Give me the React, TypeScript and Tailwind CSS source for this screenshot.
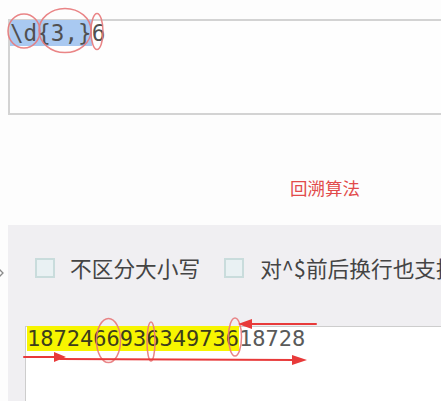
import React from "react";

const mono = { fontFamily: '"DejaVu Sans Mono", "Liberation Mono", monospace' };
const cjk = { fontFamily: '"Noto Sans CJK SC", "Noto Sans", sans-serif' };

function Checkbox() {
  return <div className="w-[20px] h-[20px] border-2 border-[#c9dcdc] bg-[#e9f1f3] shrink-0" />;
}

export default function App() {
  return (
    <div className="relative w-[441px] h-[401px] overflow-hidden bg-[#fdfdfd]">
      <div className="flex flex-col h-full">
        {/* top textbox */}
        <div className="pt-[19px] pl-[8px]">
          <div className="w-[450px] h-[96px] border-2 border-[#d3d3d3] bg-[#fefefe] pt-[1px]">
            <div className="text-[22.6px] leading-[23px] text-[#505050] whitespace-pre" style={mono}>
              <span className="bg-[#a9c9f1]">{"\\d{3,}"}</span>6
            </div>
          </div>
        </div>
        {/* note */}
        <div className="pl-[290px] pt-[63px] h-[110px]">
          <div className="text-[17.5px] leading-[20px] text-[#e24b4b]" style={cjk}>回溯算法</div>
        </div>
        {/* gray panel */}
        <div className="flex flex-1 min-w-0">
          <div className="w-[8px] shrink-0">
            <svg width="8" height="60" viewBox="0 0 8 60" className="mt-[40px]">
              <polyline points="-2,3 3,8 -2,13" fill="none" stroke="#8a8a8a" strokeWidth="1.3" />
            </svg>
          </div>
          <div className="flex-1 min-w-0 overflow-hidden bg-[#f0eff2] flex flex-col">
            <div className="flex items-center pl-[27px] pt-[32px] h-[54px] text-[21.7px] text-[#444]" style={cjk}>
              <Checkbox />
              <span className="ml-[15px] whitespace-nowrap">不区分大小写</span>
              <span className="ml-[24px]"><Checkbox /></span>
              <span className="ml-[16px] whitespace-nowrap">对^$前后换行也支持</span>
            </div>
            <div className="pl-[17px] pt-[47px] flex-1 flex">
              <div className="flex-1 border-t border-l border-[#cdcdcd] bg-white pl-[1px]">
                <div className="text-[22px] leading-[24px] whitespace-pre" style={mono}>
                  <span className="bg-[#f7f500] text-[#3d3d1c]">1872466936349736</span>
                  <span className="text-[#5a5a5a]">18728</span>
                </div>
              </div>
            </div>
          </div>
        </div>
      </div>

      {/* red annotations overlay */}
      <svg className="absolute inset-0 pointer-events-none" width="441" height="401" viewBox="0 0 441 401">
        <g fill="none" stroke="#e8787a" strokeWidth="1.5" opacity="0.9">
          <ellipse cx="24" cy="31" rx="16" ry="17" />
          <ellipse cx="65" cy="30.5" rx="26" ry="22" />
          <ellipse cx="97" cy="31.5" rx="6" ry="18" />
          <ellipse cx="108.5" cy="340.5" rx="12" ry="22" />
          <ellipse cx="151" cy="341.5" rx="4" ry="19.5" />
          <ellipse cx="235" cy="337" rx="6.5" ry="19" />
        </g>
        <g stroke="#e83a3a" strokeWidth="2" fill="#e83a3a" strokeLinecap="round">
          <line x1="24" y1="357" x2="58" y2="357" />
          <polygon points="54,352 66,357 54,362" stroke="none" />
          <line x1="60" y1="359" x2="296" y2="360" />
          <polygon points="292,355 307,360 292,365" stroke="none" />
          <line x1="316" y1="324" x2="248" y2="324" />
          <polygon points="252,319 238,324 252,329" stroke="none" />
        </g>
      </svg>
    </div>
  );
}
